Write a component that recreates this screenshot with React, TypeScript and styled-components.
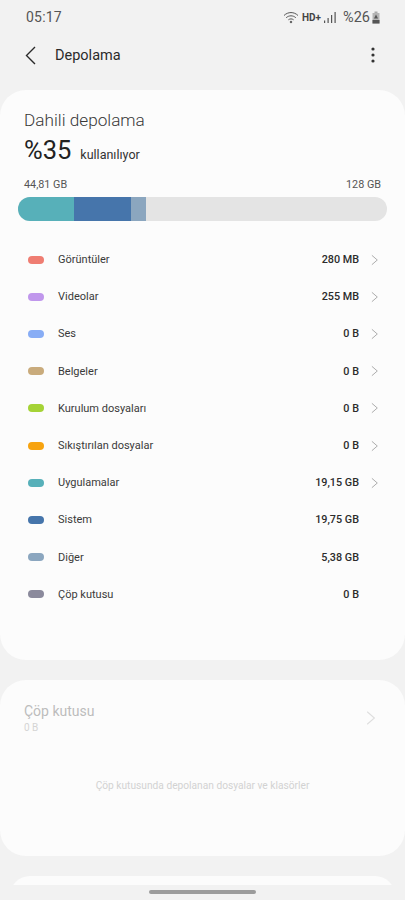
import React from "react";
import styled, { createGlobalStyle } from "styled-components";

const GlobalStyle = createGlobalStyle`
  html, body {
    margin: 0;
    padding: 0;
    background: #f2f2f2;
  }
  * {
    box-sizing: border-box;
  }
`;

const Screen = styled.div`
  position: relative;
  width: 405px;
  height: 900px;
  overflow: hidden;
  background: #f2f2f2;
  font-family: Roboto, "Noto Sans", sans-serif;
  color: #252525;
`;

const StatusBar = styled.div`
  height: 34px;
  padding: 0 25px 0 26px;
  display: flex;
  align-items: center;
  justify-content: space-between;
  color: #555;
`;

const Clock = styled.span`
  font-size: 14px;
  letter-spacing: 0.2px;
`;

const StatusIcons = styled.div`
  display: flex;
  align-items: center;
  gap: 2px;
`;

const Network = styled.span`
  font-size: 10px;
  font-weight: 700;
  color: #444;
`;

const Battery = styled.span`
  font-size: 14.5px;
  margin-left: 3px;
  margin-right: 0;
`;

const TopBar = styled.div`
  height: 42px;
  padding: 0 30px 0 25px;
  display: flex;
  align-items: center;
  margin-bottom: 14px;
`;

const Title = styled.h1`
  flex: 1;
  margin: 0 0 0 19px;
  font-size: 14.5px;
  font-weight: 400;
  color: #2a2a2a;
`;

const Card = styled.section<{ $height: number }>`
  height: ${(p) => p.$height}px;
  background: #fcfcfc;
  border-radius: 26px;
  margin-bottom: 20px;
`;

const StorageCard = styled(Card)`
  padding: 20px 18px 0;
`;

const Heading = styled.h2`
  margin: 0 0 0 6px;
  font-size: 17.2px;
  line-height: 21px;
  font-weight: 300;
  color: #383838;
`;

const UsedRow = styled.div`
  margin: 4px 0 0 6px;
  display: flex;
  align-items: baseline;
  gap: 9px;
`;

const Percent = styled.span`
  font-size: 25.5px;
  line-height: 30px;
  font-weight: 400;
  color: #222;
`;

const UsedLabel = styled.span`
  font-size: 12.5px;
  color: #333;
`;

const Amounts = styled.div`
  margin: 13px 6px 5px;
  display: flex;
  justify-content: space-between;
  font-size: 10.8px;
  line-height: 14px;
  color: #555;
`;

const Bar = styled.div`
  height: 24px;
  width: 369px;
  border-radius: 12px;
  background: #e4e4e4;
  overflow: hidden;
  display: flex;
`;

const Segment = styled.div<{ $color: string; $width: number }>`
  width: ${(p) => p.$width}px;
  background: ${(p) => p.$color};
`;

const List = styled.ul`
  list-style: none;
  margin: 20px 0 0;
  padding: 0;
`;

const Row = styled.li`
  height: 37.2px;
  padding: 0 9px 0 10px;
  display: flex;
  align-items: center;
  font-size: 11px;
  color: #3a3a3a;
`;

const Pill = styled.span<{ $color: string }>`
  width: 16px;
  height: 8px;
  border-radius: 4px;
  background: ${(p) => p.$color};
  margin-right: 14px;
`;

const RowName = styled.span`
  flex: 1;
`;

const RowSize = styled.span`
  font-size: 10.8px;
  font-weight: 500;
  color: #2c2c2c;
`;

const ChevronSlot = styled.span`
  width: 19px;
  display: flex;
  justify-content: flex-end;
`;

const TrashCard = styled(Card)`
  padding: 22px 24px 0;
`;

const TrashHead = styled.div`
  display: flex;
  align-items: center;
  justify-content: space-between;
  padding-right: 5px;
`;

const TrashTitle = styled.div`
  font-size: 14px;
  line-height: 18px;
  font-weight: 400;
  color: #bcbcbc;
`;

const TrashSize = styled.div`
  font-size: 10px;
  line-height: 12px;
  color: #d4d4d4;
  margin-top: 2px;
`;

const TrashNote = styled.p`
  margin: 46px 0 0;
  text-align: center;
  font-size: 10.2px;
  color: #d2d2d2;
`;

const PeekCard = styled.div`
  height: 40px;
  margin: 0 10px;
  background: #fcfcfc;
  border-radius: 26px;
`;

const BottomMask = styled.div`
  position: absolute;
  left: 0;
  right: 0;
  bottom: 0;
  height: 15px;
  background: #f2f2f2;
`;

const HomeHandle = styled.div`
  position: absolute;
  left: 149px;
  bottom: 6px;
  width: 107px;
  height: 4px;
  border-radius: 2px;
  background: #9c9c9c;
`;

const Chevron = ({ size = 12, color = "#9a9a9a" }: { size?: number; color?: string }) => (
  <svg width={size * 0.6} height={size} viewBox="0 0 8 12" fill="none">
    <path d="M1 0.8 L7 6 L1 11.2" stroke={color} strokeWidth="0.9" />
  </svg>
);

const rows = [
  { name: "Görüntüler", size: "280 MB", color: "#ef7d72", link: true },
  { name: "Videolar", size: "255 MB", color: "#c097ec", link: true },
  { name: "Ses", size: "0 B", color: "#88adf5", link: true },
  { name: "Belgeler", size: "0 B", color: "#c9ab7c", link: true },
  { name: "Kurulum dosyaları", size: "0 B", color: "#a5d336", link: true },
  { name: "Sıkıştırılan dosyalar", size: "0 B", color: "#f7a30f", link: true },
  { name: "Uygulamalar", size: "19,15 GB", color: "#57b0b9", link: true },
  { name: "Sistem", size: "19,75 GB", color: "#4675ab", link: false },
  { name: "Diğer", size: "5,38 GB", color: "#8ba6bf", link: false },
  { name: "Çöp kutusu", size: "0 B", color: "#8b8a9c", link: false },
];

export default function App() {
  return (
    <Screen>
      <GlobalStyle />
      <StatusBar>
        <Clock>05:17</Clock>
        <StatusIcons>
          <svg width="17" height="13" viewBox="0 0 17 13" fill="none" stroke="#555" strokeWidth="1">
            <path d="M1 4.5 C5 0.6 11 0.6 15 4.5" />
            <path d="M3.2 6.7 C6 4.2 10 4.2 12.8 6.7" />
            <path d="M5.4 8.8 C7 7.6 9 7.6 10.6 8.8" />
            <circle cx="8" cy="11" r="0.8" fill="#555" />
          </svg>
          <Network>HD+</Network>
          <svg width="15" height="13" viewBox="0 0 15 13" fill="#555" stroke="none">
            <rect x="1" y="9.5" width="1.2" height="2.5" />
            <rect x="4.5" y="7" width="1.2" height="5" />
            <rect x="8" y="4" width="1.2" height="8" />
            <rect x="11.5" y="1" width="1.2" height="11" />
          </svg>
          <Battery>%26</Battery>
          <svg width="8" height="13" viewBox="0 0 8 13">
            <rect x="2.5" y="0.5" width="3" height="1.5" fill="#aaa" />
            <rect x="0.5" y="2" width="7" height="10.5" fill="#b5b5b5" />
            <rect x="0.5" y="9" width="7" height="3.5" fill="#555" />
            <path d="M4 3.5 L2 7.5 H6 Z" fill="#555" />
          </svg>
        </StatusIcons>
      </StatusBar>
      <TopBar>
        <svg width="11" height="19" viewBox="0 0 11 19" fill="none">
          <path d="M10 1 L1.5 9.5 L10 18" stroke="#2a2a2a" strokeWidth="1.4" />
        </svg>
        <Title>Depolama</Title>
        <svg width="4" height="16" viewBox="0 0 4 16" fill="#333">
          <circle cx="2" cy="2" r="1.6" />
          <circle cx="2" cy="8" r="1.6" />
          <circle cx="2" cy="14" r="1.6" />
        </svg>
      </TopBar>
      <StorageCard $height={570}>
        <Heading>Dahili depolama</Heading>
        <UsedRow>
          <Percent>%35</Percent>
          <UsedLabel>kullanılıyor</UsedLabel>
        </UsedRow>
        <Amounts>
          <span>44,81 GB</span>
          <span>128 GB</span>
        </Amounts>
        <Bar>
          <Segment $color="#57b0b9" $width={56} />
          <Segment $color="#4675ab" $width={57} />
          <Segment $color="#8ba6bf" $width={15} />
        </Bar>
        <List>
          {rows.map((r) => (
            <Row key={r.name}>
              <Pill $color={r.color} />
              <RowName>{r.name}</RowName>
              <RowSize>{r.size}</RowSize>
              <ChevronSlot>{r.link && <Chevron />}</ChevronSlot>
            </Row>
          ))}
        </List>
      </StorageCard>
      <TrashCard $height={176}>
        <TrashHead>
          <div>
            <TrashTitle>Çöp kutusu</TrashTitle>
            <TrashSize>0 B</TrashSize>
          </div>
          <Chevron size={16} color="#dedede" />
        </TrashHead>
        <TrashNote>Çöp kutusunda depolanan dosyalar ve klasörler</TrashNote>
      </TrashCard>
      <PeekCard />
      <BottomMask />
      <HomeHandle />
    </Screen>
  );
}
